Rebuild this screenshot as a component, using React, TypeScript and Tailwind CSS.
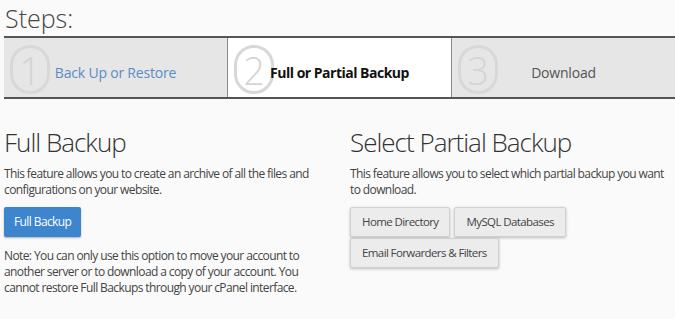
import React from 'react';

type Step = {
  num: string;
  label: string;
  state: 'done' | 'active' | 'todo';
};

const steps: Step[] = [
  { num: '1', label: 'Back Up or Restore', state: 'done' },
  { num: '2', label: 'Full or Partial Backup', state: 'active' },
  { num: '3', label: 'Download', state: 'todo' },
];

const partialButtons = ['Home Directory', 'MySQL Databases', 'Email Forwarders & Filters'];

const App: React.FC = () => {
  return (
    <div className="w-[675px] h-[319px] overflow-hidden bg-[#fafafa] text-[#333] font-['Open_Sans',sans-serif]">
      <h2 className="pl-[5px] pt-[1px] text-[25px] leading-[34px] font-light text-[#444]">Steps:</h2>

      <div className="ml-[4px] mt-[1px] flex h-[63px] border-y-2 border-[#555]">
        {steps.map((step, i) => (
          <div
            key={step.num}
            className={
              'relative flex-1 flex items-center justify-center pt-[10px] ' +
              (step.state === 'active' ? 'bg-white' : 'bg-[#e6e6e6]') +
              (i > 0 ? ' border-l border-[#888]' : '')
            }
          >
            <div className="absolute left-[6px] top-[7px] w-[40px] h-[49px] rounded-full border-[3px] border-[#d8d8d8] flex items-center justify-center text-[38px] font-light text-[#d4d4d4] leading-none">
              {step.num}
            </div>
            <span
              className={
                'relative whitespace-nowrap text-[14px] ' +
                (step.state === 'done'
                  ? 'text-[#5a8cc4] tracking-[-0.2px]'
                  : step.state === 'active'
                  ? 'font-bold text-[#111] tracking-[-0.5px]'
                  : 'text-[#555] tracking-[-0.2px]')
              }
            >
              {step.label}
            </span>
          </div>
        ))}
      </div>

      <div className="mt-[26px] flex">
        <div className="w-[350px] pl-[4px]">
          <h3 className="text-[26px] leading-[34px] font-light text-[#333] tracking-[-1px]">Full Backup</h3>
          <p className="mt-[7px] text-[12px] leading-[16px] text-[#444] tracking-[-0.6px]">
            This feature allows you to create an archive of all the files and configurations on your website.
          </p>
          <button className="mt-[9px] h-[30px] px-[10px] rounded-[2px] bg-[#3d85cc] text-white text-[12px] tracking-[-0.6px] shadow-[0_1px_2px_rgba(0,0,0,0.3)]">
            Full Backup
          </button>
          <p className="mt-[11px] w-[300px] text-[12px] leading-[16px] text-[#444] tracking-[-0.6px]">
            Note: You can only use this option to move your account to another server or to download a copy of your account. You cannot restore Full Backups through your cPanel interface.
          </p>
        </div>

        <div className="flex-1">
          <h3 className="text-[26px] leading-[34px] font-light text-[#333] tracking-[-1px]">Select Partial Backup</h3>
          <p className="mt-[7px] text-[12px] leading-[16px] text-[#444] tracking-[-0.6px]">
            This feature allows you to select which partial backup you want to download.
          </p>
          <div className="mt-[9px] flex flex-wrap gap-x-[4px] gap-y-[1px] w-[220px]">
            {partialButtons.map((label) => (
              <button
                key={label}
                className="h-[30px] px-[11px] rounded-[2px] border border-[#d0d0d0] bg-[#ececec] text-[11.5px] tracking-[-0.6px] text-[#444] shadow-[0_1px_3px_rgba(0,0,0,0.25)]"
              >
                {label}
              </button>
            ))}
          </div>
        </div>
      </div>
    </div>
  );
};

export default App;
